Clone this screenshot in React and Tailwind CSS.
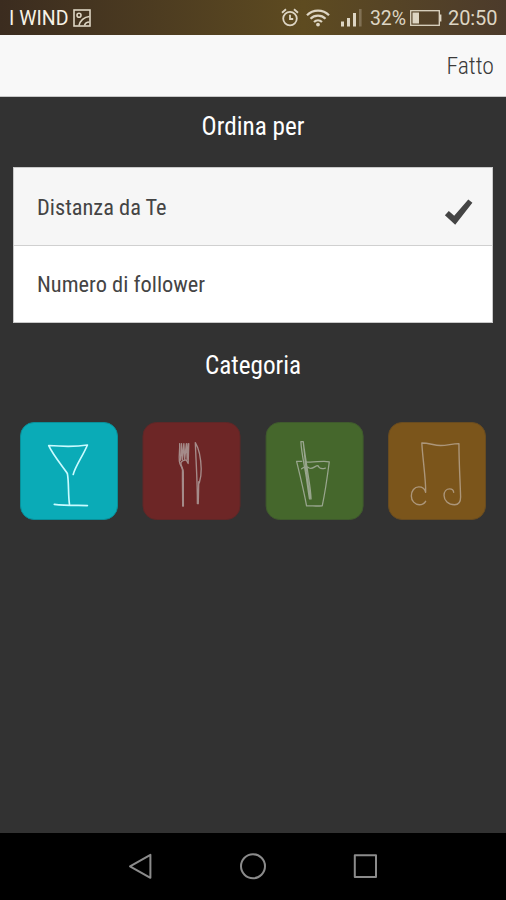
import { useState } from 'react';

const SORT_OPTIONS = [
  { id: 'distance', label: 'Distanza da Te' },
  { id: 'followers', label: 'Numero di follower' },
];

const CATEGORIES = [
  { id: 'drinks', label: 'Cocktail', tile: 'bg-[#0aabb7] border-[#098f99]', ink: 'text-[#c9fbff]', Icon: CocktailIcon },
  { id: 'food', label: 'Ristoranti', tile: 'bg-[#6d2626] border-[#5e2727] -translate-x-[0.5px]', ink: 'text-[#a58b89]', Icon: CutleryIcon },
  { id: 'soft', label: 'Bar', tile: 'bg-[#45672c] border-[#3f592d] translate-x-[0.6px]', ink: 'text-[#98a58d]', Icon: GlassIcon },
  { id: 'music', label: 'Musica', tile: 'bg-[#7b551b] border-[#684b20]', ink: 'text-[#ac967a]', Icon: MusicIcon },
];

function CocktailIcon() {
  return (
    <svg viewBox="0 0 98 98" className="size-full" fill="none" stroke="currentColor" strokeWidth="1.7" strokeLinecap="round" strokeLinejoin="round">
      <path d="M53.3 52.5 C56 43 63 34 67.8 22.5 C55 24.5 42 24 28.3 23 C33 33 43 45 47.3 51.5 C49 60 48 73 49.5 83" />
      <path d="M34 83 C45 84.3 56 84 67.8 84.3" />
    </svg>
  );
}

function CutleryIcon() {
  return (
    <svg viewBox="0 0 98 98" className="size-full" fill="none" stroke="currentColor" strokeWidth="1.4" strokeLinecap="round" strokeLinejoin="round">
      <path d="M36.9 21 C37.4 27 35.9 33 36.6 39 C37 43 39.6 44.5 39.8 48 C39.6 61 40 72 40 84.7" />
      <path d="M40.7 84.7 L40.6 50 C40.6 46 37.6 43.5 38.2 40.5 C39.5 38.4 42.5 37.4 43.8 38 L45.6 41.3 L46.2 21" />
      <path d="M37.6 38 L38.8 21 L39.6 37.5 L41.2 21 L42 37 L43.8 21 L44.6 37.5 L45.6 21" />
      <path d="M55 82.3 C55.2 62 53.6 40 52.9 20 C56 25 58.6 36 58.9 47 C59 52 58.2 57 57 61 M55.9 82.3 L56.4 60" />
    </svg>
  );
}

function GlassIcon() {
  return (
    <svg viewBox="0 0 98 98" className="size-full" fill="none" stroke="currentColor" strokeWidth="1.3" strokeLinecap="round" strokeLinejoin="round">
      <path d="M39.5 39.6 C48 41 56 38 64 39.6 C62 55 60 70 56.8 84.5 C51 85 46 84.5 40.8 84.7 C38 69 34.5 55 30.6 39.2 L35.8 39.2" />
      <path d="M35.7 46.8 C39 44 41 44 43.5 46 C47 48 50 43 52.5 43.5 C54 47.5 57 47 60 46" />
      <path d="M37.4 19 L35 19 C35.5 30 38 40 40.5 55 C41.5 62 42.5 70 43.8 77.5 L45.4 77.5 C45 67 43 58 41.4 46 C39.8 36 38.4 27 37.4 19 L40.6 50 L44.3 76" />
    </svg>
  );
}

function MusicIcon() {
  return (
    <svg viewBox="0 0 98 98" className="size-full" fill="none" stroke="currentColor" strokeWidth="1.4" strokeLinecap="round" strokeLinejoin="round">
      <path d="M37.4 79.9 C36 82.2 33.8 83.4 31 83.4 C26.4 83.4 22.8 79.4 22.8 74.4 C22.8 69.2 26 65.2 30.4 65.2 C34.2 65.2 36.6 67.2 37.4 70.7 C37.8 58 34.4 37 33.5 20.4 C40 20.2 46 22.9 52.5 23 C59 23.1 65 21 71.4 21.1 C71.4 40 72.6 58 73.1 75.5 C73.1 80.6 70.8 83.4 67 83.4 C60.5 83.4 56.2 79 56.2 74 C56.2 69.8 58.6 67.2 62 67.2 C64.4 67.2 65.8 68.5 66 70.7" />
    </svg>
  );
}

function StatusBar() {
  return (
    <div className="flex h-[35px] shrink-0 items-center bg-linear-to-r from-[#3b2c1f] via-[#5e4b20] via-60% to-[#4c3b2b] pr-[8px] pl-[9px] font-[Roboto] text-[19.5px] text-[#ddd5c3] [font-stretch:100%]">
      <span className="w-[61px] pt-[2px] text-[19.5px] leading-none whitespace-nowrap text-[#f7f2e6]">I WIND</span>
      <svg viewBox="0 0 18 18" className="ml-[3px] size-[18px]" fill="none" stroke="currentColor" strokeWidth="1.6">
        <rect x="1" y="1" width="16" height="16" />
        <circle cx="6" cy="6.3" r="2" />
        <path d="M6 16.5 C7 12 11 7.8 16.5 7.5 M11.5 16.5 C12 14.5 13.5 13 16.5 13" />
      </svg>
      <svg viewBox="0 0 18 19" className="ml-auto h-[19px] w-[18px]" fill="none" stroke="currentColor" strokeWidth="1.8">
        <circle cx="9" cy="10.6" r="6.8" />
        <path d="M9 6.8 V11 H12.2" />
        <path d="M1 4.8 L5 1.3 M17 4.8 L13 1.3" />
      </svg>
      <svg viewBox="0 0 24 18" className="ml-[7px] h-[18px] w-[24px]" fill="none" stroke="currentColor" strokeWidth="2.2">
        <path d="M1 6.3 C7 0 17 0 23 6.3" />
        <path d="M4.5 9.8 C8.5 5.6 15.5 5.6 19.5 9.8" />
        <path d="M8 13 C10.3 10.8 13.7 10.8 16 13" />
        <circle cx="12" cy="15.6" r="1.9" fill="currentColor" stroke="none" />
      </svg>
      <svg viewBox="0 0 21 18" className="ml-[11px] h-[18px] w-[21px]" fill="currentColor">
        <rect x="0" y="12.5" width="3" height="5" />
        <rect x="6" y="9" width="3" height="8.5" />
        <rect x="12" y="4" width="3" height="13.5" />
        <rect x="18" y="0" width="2.6" height="17.5" opacity="0.3" />
      </svg>
      <span className="ml-[8px] w-[37px] pt-[2px] leading-none tracking-[-0.1px]">32%</span>
      <svg viewBox="0 0 32 16" className="ml-[3px] h-[16px] w-[32px]" fill="none" stroke="currentColor">
        <rect x="0.7" y="0.7" width="28.6" height="14.6" strokeWidth="1.3" />
        <rect x="2.5" y="2.5" width="6.5" height="11" fill="currentColor" stroke="none" />
        <path d="M30.6 4.5 V11.5" strokeWidth="1.6" />
      </svg>
      <span className="ml-[6px] w-[50px] pt-[1px] text-[20px] leading-none tracking-[-0.1px]">20:50</span>
    </div>
  );
}

function NavBar() {
  return (
    <div className="flex h-[67px] shrink-0 items-center justify-center bg-black pb-[2px] text-[#8b8b8b]">
      <svg viewBox="0 0 28 28" className="size-7" fill="none" stroke="currentColor" strokeWidth="2" strokeLinejoin="round">
        <path d="M24.4 2.8 V25.8 L4 14.3 Z" />
      </svg>
      <svg viewBox="0 0 28 28" className="mx-[85px] size-7" fill="none" stroke="currentColor" strokeWidth="2">
        <circle cx="14" cy="14.3" r="12" />
      </svg>
      <svg viewBox="0 0 28 28" className="size-7" fill="none" stroke="currentColor" strokeWidth="2" strokeLinejoin="round">
        <rect x="2.8" y="3.3" width="21.2" height="21.8" />
      </svg>
    </div>
  );
}

export default function App() {
  const [sort, setSort] = useState('distance');

  return (
    <div className="flex h-[900px] w-[506px] flex-col overflow-hidden bg-[#323232] font-['Roboto_Condensed',Roboto,sans-serif] [font-stretch:75%]">
      <StatusBar />

      <header className="flex h-[62px] shrink-0 items-center justify-end border-b border-[#c8c8c8] bg-[#f8f8f8] pt-[3px] pr-[12px]">
        <button className="text-[23.7px] font-light text-[#3a3a3a]">Fatto</button>
      </header>

      <main className="flex-1">
        <h2 className="flex h-[70px] justify-center pt-[12px] text-[25.2px] leading-[36px] text-white">Ordina per</h2>

        <ul className="mx-[13px] border border-[#c9c9c9] bg-white">
          {SORT_OPTIONS.map(({ id, label }) => (
            <li key={id} className="border-[#d0d0d0] not-last:border-b">
              <button
                onClick={() => setSort(id)}
                className={`flex w-full items-center justify-between pt-[2px] pr-[18px] pl-[23px] text-left text-[22.4px] text-[#444] ${
                  sort === id ? 'h-[77px] bg-[#f6f6f6]' : 'h-[76px]'
                }`}
              >
                <span>{label}</span>
                {sort === id && (
                  <svg viewBox="0 0 30 28" className="mt-[10px] h-7 w-[30px]" fill="#444">
                    <path d="M0.9 16.2 L4.8 12 L10.2 16.8 L24.3 0.4 L28.4 3.8 L11.2 25.8 Z" />
                  </svg>
                )}
              </button>
            </li>
          ))}
        </ul>

        <h2 className="flex justify-center pt-[25px] text-[25.2px] leading-[36px] text-white">Categoria</h2>

        <div className="mt-[38px] flex justify-between px-5">
          {CATEGORIES.map(({ id, label, tile, ink, Icon }) => (
            <button key={id} aria-label={label} className={`size-[98px] rounded-[14px] border ${tile} ${ink}`}>
              <Icon />
            </button>
          ))}
        </div>
      </main>

      <NavBar />
    </div>
  );
}
